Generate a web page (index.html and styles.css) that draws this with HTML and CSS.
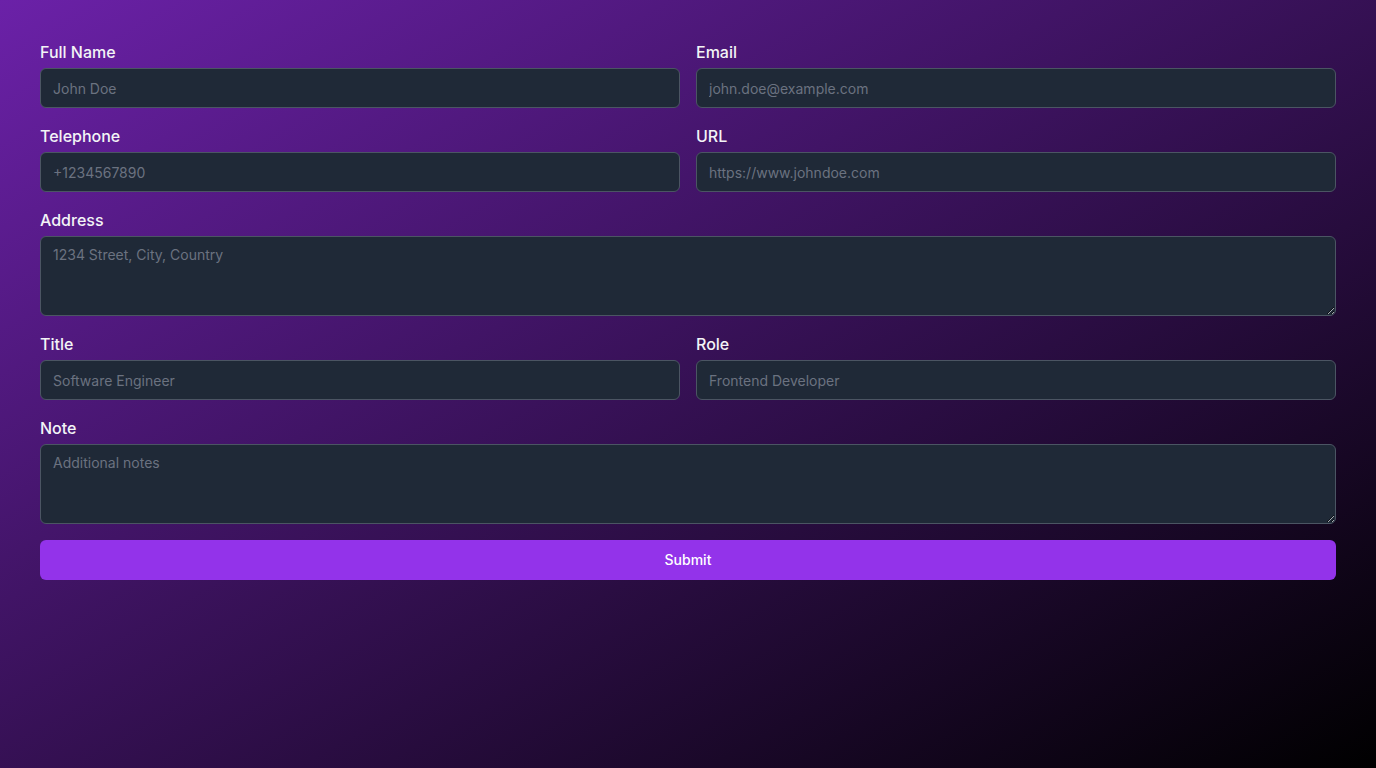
FILE: index.html
```html
<!DOCTYPE html>
<html lang="en">
<head>
<meta charset="utf-8">
<title>Contact Form</title>
<link rel="stylesheet" href="styles.css">
</head>
<body>
<main class="page">
  <form class="form">
    <div class="row">
      <div class="field">
        <label class="label" for="name">Full Name</label>
        <input class="input" id="name" type="text" placeholder="John Doe">
      </div>
      <div class="field">
        <label class="label" for="email">Email</label>
        <input class="input" id="email" type="email" placeholder="john.doe@example.com">
      </div>
    </div>
    <div class="row">
      <div class="field">
        <label class="label" for="tel">Telephone</label>
        <input class="input" id="tel" type="tel" placeholder="+1234567890">
      </div>
      <div class="field">
        <label class="label" for="url">URL</label>
        <input class="input" id="url" type="url" placeholder="https://www.johndoe.com">
      </div>
    </div>
    <div class="field">
      <label class="label" for="address">Address</label>
      <textarea class="input textarea" id="address" placeholder="1234 Street, City, Country"></textarea>
    </div>
    <div class="row">
      <div class="field">
        <label class="label" for="title">Title</label>
        <input class="input" id="title" type="text" placeholder="Software Engineer">
      </div>
      <div class="field">
        <label class="label" for="role">Role</label>
        <input class="input" id="role" type="text" placeholder="Frontend Developer">
      </div>
    </div>
    <div class="field">
      <label class="label" for="note">Note</label>
      <textarea class="input textarea" id="note" placeholder="Additional notes"></textarea>
    </div>
    <button class="submit" type="button">Submit</button>
  </form>
</main>
</body>
</html>
```

FILE: styles.css
```css
* { box-sizing: border-box; }
html, body { margin: 0; height: 100%; }
body {
  font-family: Inter, "Noto Sans", sans-serif;
  background: linear-gradient(to bottom right, #6b21a8 0%, #000000 100%);
  color: #f3f4f6;
  min-height: 768px;
}
.page { padding: 40px; }
.form { display: flex; flex-direction: column; gap: 16px; }
.row { display: grid; grid-template-columns: 1fr 1fr; gap: 16px; }
.field { display: flex; flex-direction: column; gap: 4px; }
.label { font-size: 16px; line-height: 24px; font-weight: 500; color: #f3f4f6; }
.input {
  height: 40px;
  width: 100%;
  background: #1f2937;
  border: 1px solid #4b5563;
  border-radius: 6px;
  padding: 0 12px;
  font-family: inherit;
  font-size: 14px;
  line-height: 20px;
  color: #f3f4f6;
  outline: none;
}
.input::placeholder { color: #6b7280; }
.textarea {
  height: 80px;
  padding: 8px 12px;
  resize: vertical;
  display: block;
}
.submit {
  height: 40px;
  padding: 0 0 2px;
  background: #9333ea;
  color: #ffffff;
  border: none;
  border-radius: 6px;
  font-family: inherit;
  font-size: 14px;
  font-weight: 500;
  cursor: pointer;
}
```
